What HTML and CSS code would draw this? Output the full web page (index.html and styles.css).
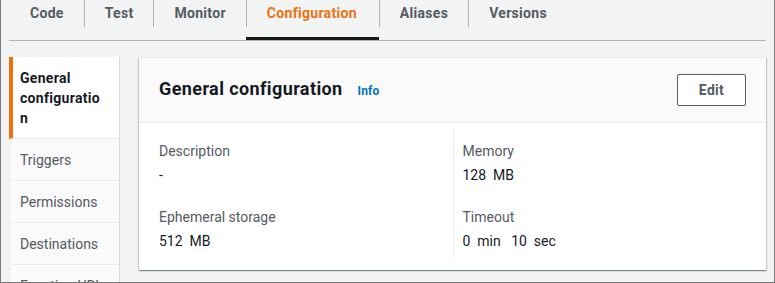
FILE: index.html
```html
<!DOCTYPE html>
<html lang="en">
<head>
    <meta charset="UTF-8">
    <meta name="viewport" content="width=device-width, initial-scale=1.0">
    <title>Function configuration</title>
    <link rel="stylesheet" href="styles.css">
</head>
<body>
    <div class="frame">
        <ul class="tabs">
            <li class="tab">Code</li>
            <li class="tab">Test</li>
            <li class="tab">Monitor</li>
            <li class="tab tab-active">Configuration</li>
            <li class="tab">Aliases</li>
            <li class="tab">Versions</li>
        </ul>

        <div class="layout">
            <ul class="side-nav">
                <li class="side-item side-active">General configuration</li>
                <li class="side-item">Triggers</li>
                <li class="side-item">Permissions</li>
                <li class="side-item">Destinations</li>
                <li class="side-item">Function URL</li>
            </ul>

            <div class="panel">
                <div class="panel-header">
                    <h2 class="panel-title">General configuration <a class="info-link">Info</a></h2>
                    <button class="edit-btn">Edit</button>
                </div>
                <div class="panel-body">
                    <div class="column">
                        <div class="field">
                            <div class="field-label">Description</div>
                            <div class="field-value">-</div>
                        </div>
                        <div class="field">
                            <div class="field-label">Ephemeral storage</div>
                            <div class="field-value">512&nbsp; MB</div>
                        </div>
                    </div>
                    <div class="column column-right">
                        <div class="field">
                            <div class="field-label">Memory</div>
                            <div class="field-value">128&nbsp; MB</div>
                        </div>
                        <div class="field">
                            <div class="field-label">Timeout</div>
                            <div class="field-value">0&nbsp; min &nbsp; 10&nbsp; sec</div>
                        </div>
                    </div>
                </div>
            </div>
        </div>
    </div>
</body>
</html>
```

FILE: styles.css
```css
* {
    margin: 0;
    padding: 0;
    box-sizing: border-box;
    font-family: Roboto, "Liberation Sans", sans-serif;
}

body {
    background-color: #f2f3f3;
}

.frame {
    height: 283px;
    overflow: hidden;
    border: 1px solid #7b7b7b;
    border-top: none;
    padding: 0 8px;
    font-size: 14px;
    color: #16191f;
}

/* top tabs */
.tabs {
    list-style: none;
    display: flex;
    height: 41px;
    border-bottom: 1px solid #aab7b8;
}

.tab {
    position: relative;
    padding: 3px 20px 0 21px;
    line-height: 20px;
    font-weight: 700;
    letter-spacing: 0.3px;
    color: #545b64;
    border-bottom: 3px solid transparent;
}

.tab + .tab::before {
    content: "";
    position: absolute;
    left: 0;
    top: 0;
    height: 27px;
    border-left: 1px solid #aab7b8;
}

.tab-active {
    padding-right: 22px;
    color: #ec7211;
    border-bottom-color: #16191f;
}

.layout {
    display: flex;
    gap: 19px;
    margin-top: 16px;
    align-items: flex-start;
}

/* side navigation */
.side-nav {
    list-style: none;
    width: 111px;
    flex-shrink: 0;
    border-left: 1px solid #eaeded;
    border-right: 1px solid #d5dbdb;
}

.side-item {
    padding: 11px 14px 10px 7px;
    line-height: 20px;
    color: #545b64;
    background-color: #fafafa;
    border-left: 3px solid #fafafa;
    border-bottom: 1px solid #eaeded;
    overflow-wrap: anywhere;
}

.side-active {
    margin-left: -1px;
    background-color: #fff;
    color: #16191f;
    font-weight: 700;
    letter-spacing: 0.3px;
    border-left: 4px solid #ec7211;
}

/* main panel */
.panel {
    flex: 1;
    background: #fff;
    border-top: 1px solid #eaeded;
    box-shadow: 0 1px 1px 0 rgba(0, 28, 36, 0.3), 1px 1px 1px 0 rgba(0, 28, 36, 0.15), -1px 1px 1px 0 rgba(0, 28, 36, 0.15);
}

.panel-header {
    display: flex;
    align-items: center;
    justify-content: space-between;
    padding: 16px 20px 16px;
    background-color: #fafafa;
    border-bottom: 1px solid #eaeded;
}

.panel-title {
    font-size: 18px;
    font-weight: 700;
    line-height: 24px;
    letter-spacing: 0.4px;
    color: #16191f;
}

.info-link {
    margin-left: 10px;
    font-size: 12px;
    font-weight: 700;
    letter-spacing: 0.2px;
    color: #0073bb;
}

.edit-btn {
    width: 69px;
    height: 32px;
    border: 1px solid #545b64;
    border-radius: 2px;
    background: #fff;
    color: #545b64;
    font-size: 14px;
    font-weight: 700;
    letter-spacing: 0.3px;
}

.panel-body {
    display: grid;
    grid-template-columns: 1fr 1fr;
    padding: 5px 20px 10px;
}

.column {
    padding: 13px 0 9px;
}

.column-right {
    border-left: 1px solid #eaeded;
    padding-left: 9px;
}

.field + .field {
    margin-top: 22px;
}

.field-label {
    line-height: 20px;
    color: #545b64;
}

.field-value {
    margin-top: 4px;
    line-height: 20px;
    color: #16191f;
}
```
